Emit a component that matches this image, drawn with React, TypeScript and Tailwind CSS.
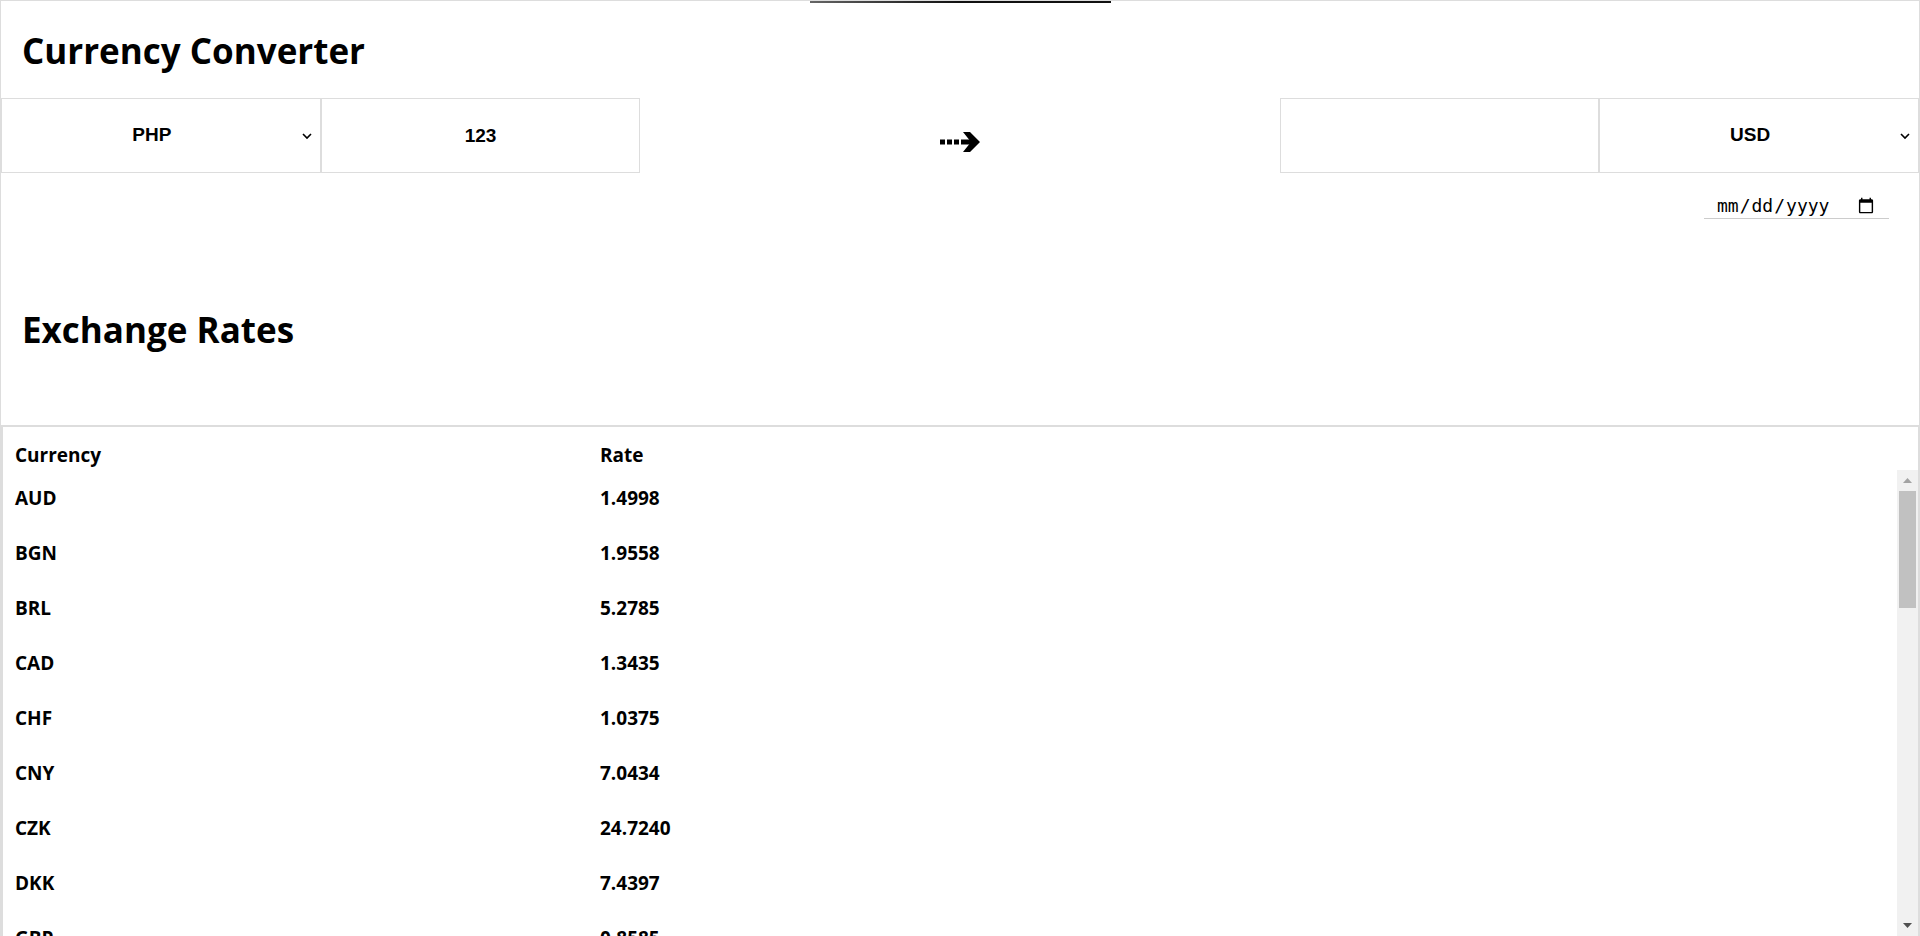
import { useState } from "react";

const rates: [string, number][] = [
  ["AUD", 1.4998],
  ["BGN", 1.9558],
  ["BRL", 5.2785],
  ["CAD", 1.3435],
  ["CHF", 1.0375],
  ["CNY", 7.0434],
  ["CZK", 24.724],
  ["DKK", 7.4397],
  ["GBP", 0.8585],
  ["HKD", 8.2368],
  ["HUF", 400.93],
  ["IDR", 15453.37],
  ["ILS", 3.6342],
  ["INR", 81.6725],
  ["ISK", 138.3],
  ["JPY", 141.05],
  ["KRW", 1350.06],
  ["MXN", 21.2978],
  ["MYR", 4.6148],
  ["NOK", 10.4025],
  ["NZD", 1.6626],
  ["PHP", 56.093],
  ["PLN", 4.6513],
  ["RON", 4.9467],
  ["SEK", 10.6983],
  ["SGD", 1.4529],
  ["THB", 36.622],
  ["TRY", 18.0375],
  ["USD", 1.0494],
  ["ZAR", 16.7045],
];

const codes = ["EUR", ...rates.map(([c]) => c)];

function DashedArrow() {
  return (
    <svg width="42" height="22" viewBox="0 0 42 22" fill="#000">
      <rect x="1" y="8.5" width="5" height="5" />
      <rect x="8" y="8.5" width="5" height="5" />
      <rect x="15" y="8.5" width="5" height="5" />
      <rect x="22" y="8.5" width="10" height="5" />
      <polygon points="24,1 31,1 41,11 31,21 24,21 32,11" />
    </svg>
  );
}

function Chevron() {
  return (
    <svg
      width="10"
      height="7"
      viewBox="0 0 10 7"
      fill="none"
      stroke="#000"
      strokeWidth="1.6"
      className="pointer-events-none absolute right-[9px] top-1/2 -translate-y-1/2"
    >
      <path d="M1 1.5 5 5.5 9 1.5" />
    </svg>
  );
}

function CurrencySelect({ value, onChange }: { value: string; onChange: (v: string) => void }) {
  return (
    <div className="relative h-full">
      <select
        value={value}
        onChange={(e) => onChange(e.target.value)}
        className="h-full w-full appearance-none border border-[#dddddd] bg-white pr-[18px] text-center font-bold outline-none [text-align-last:center]"
      >
        {codes.map((c) => (
          <option key={c}>{c}</option>
        ))}
      </select>
      <Chevron />
    </div>
  );
}

export default function App() {
  const [from, setFrom] = useState("PHP");
  const [to, setTo] = useState("USD");
  const [amount, setAmount] = useState("123");

  return (
    <div className="relative flex h-screen flex-col overflow-hidden border-x border-t border-[#dddddd] bg-white font-['Open_Sans',sans-serif] text-black">
      {/* top progress strip */}
      <div className="absolute left-[809px] top-0 h-[2px] w-[301px] bg-gradient-to-r from-[#666666] via-[#111111] to-[#111111]" />

      <h1 className="mt-[32px] px-[21px] text-[35px] font-bold leading-[35px]">Currency Converter</h1>

      <div className="mt-[30px] grid h-[75px] grid-cols-6 font-['Liberation_Sans',Arial,sans-serif] text-[19px] font-bold">
        <CurrencySelect value={from} onChange={setFrom} />
        <input
          value={amount}
          onChange={(e) => setAmount(e.target.value)}
          className="h-full border border-[#dddddd] text-center font-bold outline-none"
        />
        <div className="col-span-2 flex items-center justify-center pt-3">
          <DashedArrow />
        </div>
        <input readOnly value="" className="h-full border border-[#dddddd] text-center font-bold outline-none" />
        <CurrencySelect value={to} onChange={setTo} />
      </div>

      <div className="mt-[20px] flex justify-end pr-[30px]">
        <input
          type="date"
          className="h-[26px] w-[185px] border-b border-[#cccccc] px-[12px] font-['DejaVu_Sans_Mono',monospace] text-[18px] outline-none"
        />
      </div>

      <h2 className="mt-[93px] px-[21px] text-[35px] font-bold leading-[35px]">Exchange Rates</h2>

      <div className="mt-[78px] flex min-h-0 flex-1 flex-col border-l-2 border-r border-t-2 border-[#dddddd] text-[19px] font-bold">
        <div className="grid h-[43px] grid-cols-[585px_1fr] pt-[15px] leading-[26px]">
          <div className="px-3">Currency</div>
          <div className="px-3">Rate</div>
        </div>
        <div className="flex min-h-0 flex-1">
          <div className="min-h-0 flex-1 overflow-hidden">
            {rates.map(([code, rate]) => (
              <div key={code} className="grid h-[55px] grid-cols-[585px_1fr] items-center pt-px">
                <div className="px-3">{code}</div>
                <div className="px-3">{rate.toFixed(4)}</div>
              </div>
            ))}
          </div>
          {/* scrollbar */}
          <div className="flex w-[21px] flex-col bg-[#f1f1f1]">
            <div className="flex h-[21px] items-center justify-center">
              <svg width="9" height="5" viewBox="0 0 9 5">
                <polygon points="0,5 4.5,0 9,5" fill="#a3a3a3" />
              </svg>
            </div>
            <div className="mx-[2px] h-[117px] bg-[#c1c1c1]" />
            <div className="flex-1" />
            <div className="flex h-[21px] items-center justify-center">
              <svg width="9" height="5" viewBox="0 0 9 5">
                <polygon points="0,0 9,0 4.5,5" fill="#505050" />
              </svg>
            </div>
          </div>
        </div>
      </div>
    </div>
  );
}
